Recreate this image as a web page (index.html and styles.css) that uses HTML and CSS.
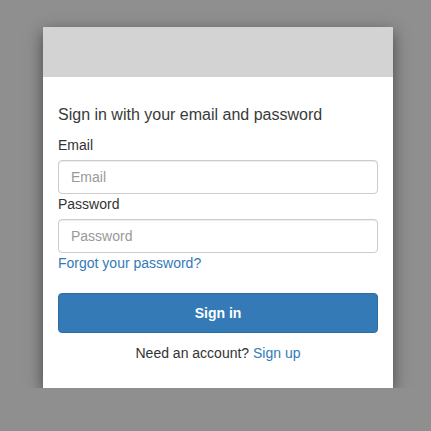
FILE: index.html
```html
<!DOCTYPE html>
<html lang="en">
<head>
    <meta charset="UTF-8">
    <meta name="viewport" content="width=device-width, initial-scale=1.0">
    <title>Signin</title>
    <link rel="stylesheet" href="styles.css">
</head>
<body>
    <div class="modal">
        <div class="banner"></div>
        <div class="modal-body">
            <h1 class="title">Sign in with your email and password</h1>
            <form>
                <label for="email">Email</label>
                <input id="email" type="text" placeholder="Email" class="field">
                <label for="password">Password</label>
                <input id="password" type="password" placeholder="Password" class="field">
                <a href="#" class="link">Forgot your password?</a>
                <button type="button" class="submit">Sign in</button>
            </form>
            <p class="footer">Need an account? <a href="#" class="link">Sign up</a></p>
        </div>
    </div>
</body>
</html>
```

FILE: styles.css
```css
* {
    box-sizing: border-box;
}
body {
    margin: 0;
    background: #8f8f8f;
    font-family: "Liberation Sans", Arial, sans-serif;
    font-size: 14px;
    line-height: 20px;
    color: #333;
    padding: 27px 0 0 43px;
}
.modal {
    width: 350px;
    background: #fff;
    box-shadow: 0 5px 15px rgba(0, 0, 0, .5);
}
.banner {
    height: 50px;
    background: #d3d3d3;
}
.modal-body {
    padding: 25px 15px 25px;
}
.title {
    font-size: 16px;
    font-weight: normal;
    line-height: 23px;
    color: #3a3a3a;
    margin: 1px 0 9px;
}
form {
    display: flex;
    flex-direction: column;
}
label {
    display: block;
    margin-bottom: 5px;
}
.field {
    height: 34px;
    width: 100%;
    padding: 6px 12px;
    font: inherit;
    color: #555;
    border: 1px solid #ccc;
    border-radius: 4px;
    box-shadow: inset 0 1px 1px rgba(0, 0, 0, .075);
}
.field::placeholder {
    color: #999;
}
.link {
    color: #337ab7;
    text-decoration: none;
}
form .link {
    align-self: flex-start;
}
.submit {
    margin-top: 20px;
    height: 40px;
    width: 100%;
    background: #337ab7;
    border: 1px solid #2e6da4;
    border-radius: 4px;
    color: #fff;
    font: bold 14px/20px "Liberation Sans", Arial, sans-serif;
}
.footer {
    margin: 10px 0 0;
    text-align: center;
}
```
